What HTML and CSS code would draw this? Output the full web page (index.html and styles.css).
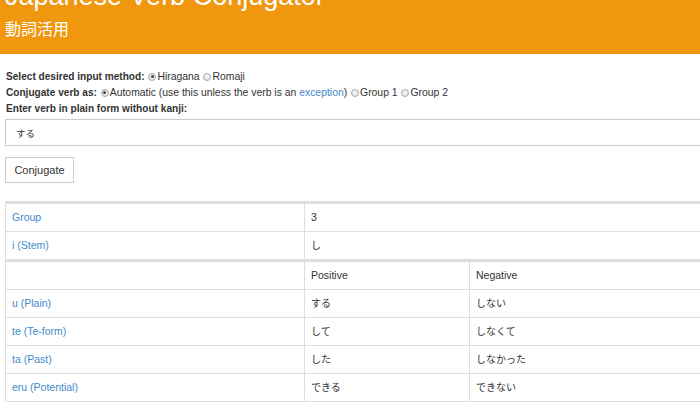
FILE: index.html
```html
<!DOCTYPE html>
<html lang="ja">
<head>
<meta charset="utf-8">
<title>Japanese Verb Conjugator</title>
<link rel="stylesheet" href="styles.css">
</head>
<body>
<div class="page">
  <header class="hdr">
    <h1 class="title">Japanese Verb Conjugator</h1>
    <div class="subtitle">動詞活用</div>
  </header>
  <main class="content">
    <form class="form">
      <div class="line"><b>Select desired input method:</b> <label class="opt"><span class="radio on"></span>Hiragana</label> <label class="opt"><span class="radio"></span>Romaji</label></div>
      <div class="line"><b>Conjugate verb as:</b> <label class="opt"><span class="radio on"></span>Automatic (use this unless the verb is an <a href="#">exception</a>)</label> <label class="opt"><span class="radio"></span>Group 1</label> <label class="opt"><span class="radio"></span>Group 2</label></div>
      <div class="line"><b>Enter verb in plain form without kanji:</b></div>
      <input class="input" type="text" value="する">
      <button class="btn" type="button">Conjugate</button>
    </form>
    <table class="tbl">
      <colgroup><col class="c1"><col></colgroup>
      <tr><td><a href="#">Group</a></td><td>3</td></tr>
      <tr><td><a href="#">i (Stem)</a></td><td class="jp">し</td></tr>
    </table>
    <table class="tbl last">
      <colgroup><col class="c1"><col class="c2"><col></colgroup>
      <tr><td></td><td>Positive</td><td>Negative</td></tr>
      <tr><td><a href="#">u (Plain)</a></td><td class="jp">する</td><td class="jp">しない</td></tr>
      <tr><td><a href="#">te (Te-form)</a></td><td class="jp">して</td><td class="jp">しなくて</td></tr>
      <tr><td><a href="#">ta (Past)</a></td><td class="jp">した</td><td class="jp">しなかった</td></tr>
      <tr><td><a href="#">eru (Potential)</a></td><td class="jp">できる</td><td class="jp">できない</td></tr>
    </table>
  </main>
</div>
</body>
</html>
```
FILE: styles.css
```css
html, body {
  margin: 0;
  padding: 0;
  overflow: hidden;
  background: #fff;
}
body {
  font-family: "Liberation Sans", Arial, "Noto Sans CJK JP", sans-serif;
  font-size: 10.5px;
  color: #333;
}
.page {
  width: 1000px;
}
a {
  color: #428bca;
  text-decoration: none;
}
.hdr {
  display: flow-root;
  background: #f0970e;
  color: #fff;
  padding: 0 5px 16px;
}
.title {
  margin: -19px 0 0;
  font-size: 27px;
  line-height: 30px;
  font-weight: normal;
  white-space: nowrap;
}
.subtitle {
  margin-top: 7px;
  font-family: "Noto Sans CJK JP", sans-serif;
  font-size: 16px;
  line-height: 20px;
}
.content {
  padding: 15px 0 0 5px;
}
.form {
  margin: 0;
}
.line {
  line-height: 16px;
  padding-left: 1px;
  white-space: nowrap;
  font-size: 10.4px;
}
.line b {
  font-size: 10.1px;
}
.opt {
  white-space: nowrap;
}
.radio {
  display: inline-block;
  width: 8px;
  height: 8px;
  box-sizing: border-box;
  border: 1px solid #a9a9a9;
  border-radius: 50%;
  background: radial-gradient(circle at 50% 40%, #fafafa 0, #dcdcdc 100%);
  margin: 0 1px 0 1px;
  vertical-align: -0.5px;
  position: relative;
}
.radio.on::after {
  content: "";
  position: absolute;
  left: 1.5px;
  top: 1.5px;
  width: 3px;
  height: 3px;
  border-radius: 50%;
  background: #444;
}
.input {
  display: block;
  box-sizing: border-box;
  margin-top: 2px;
  width: 995px;
  height: 27px;
  border: 1px solid #ccc;
  padding: 0 10px;
  font-family: "Liberation Sans", Arial, "Noto Sans CJK JP", sans-serif;
  font-size: 9.5px;
  color: #333;
  outline: none;
}
.btn {
  display: block;
  margin-top: 11px;
  width: 69px;
  height: 26px;
  box-sizing: border-box;
  padding: 0;
  text-align: center;
  border: 1px solid #ccc;
  border-radius: 0;
  background: #fff;
  font-family: "Liberation Sans", Arial, sans-serif;
  font-size: 11px;
  color: #333;
}
.tbl {
  border-collapse: separate;
  border-spacing: 0;
  table-layout: fixed;
  width: 995px;
  border-top: 3px solid #ddd;
  border-left: 1px solid #ddd;
}
.form + .tbl {
  margin-top: 18px;
}
.tbl.last {
  border-bottom: 1px solid #ddd;
}
.tbl .c1 {
  width: 299px;
}
.tbl .c2 {
  width: 165px;
}
.tbl td {
  padding: 7px 6px;
  line-height: 13px;
  border-right: 1px solid #ddd;
  border-top: 1px solid #ddd;
  vertical-align: top;
  white-space: nowrap;
}
.tbl td.jp {
  font-size: 10px;
}
.tbl tr:first-child td {
  border-top: 0;
}
```
